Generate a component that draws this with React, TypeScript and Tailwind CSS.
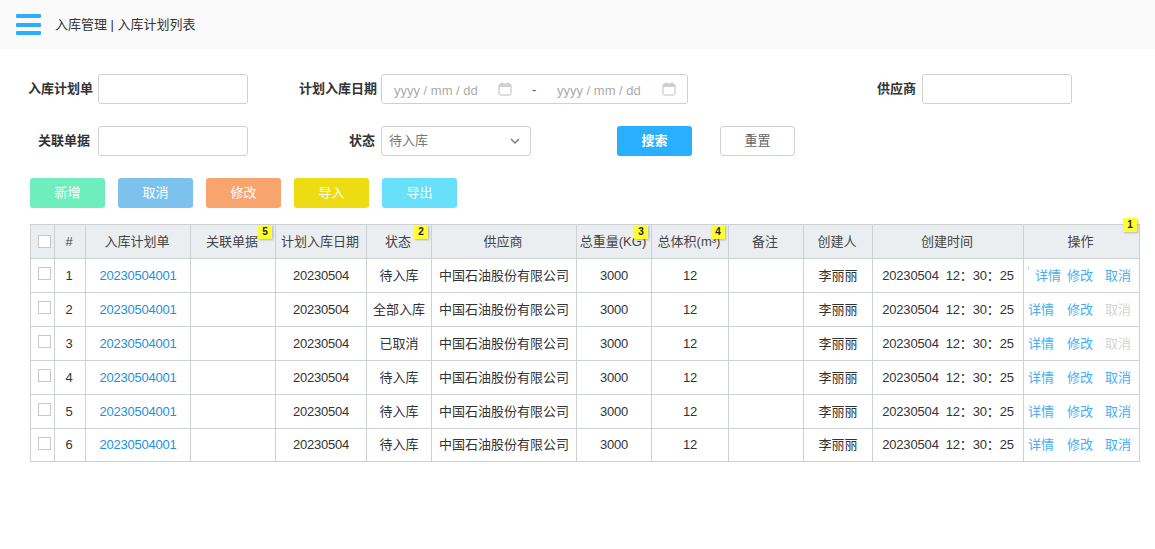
import React from "react";

const font = { fontFamily: '"Liberation Sans", Arial, "Noto Sans CJK SC", sans-serif' };

function Calendar() {
  return (
    <svg width="14" height="14" viewBox="0 0 14 14" fill="none" className="shrink-0">
      <rect x="1" y="2" width="12" height="11" rx="1.5" stroke="#bcbcbc" strokeWidth="1" />
      <rect x="1" y="2" width="12" height="3" fill="#d0d0d0" />
      <path d="M4 0.5v2M10 0.5v2" stroke="#bcbcbc" strokeWidth="1" />
    </svg>
  );
}

function Badge({ n, cls }: { n: number; cls: string }) {
  return (
    <span className={`absolute flex h-[14px] w-[14px] items-center justify-center bg-[#ffff33] text-[10px] font-bold leading-none text-[#222] shadow-[1px_1px_2px_rgba(0,0,0,0.25)] ${cls}`}>
      {n}
    </span>
  );
}

const widths = [24, 31, 105, 85, 91, 65, 145, 75, 77, 75, 69, 151, 116];
const statuses = ["待入库", "全部入库", "已取消", "待入库", "待入库", "待入库"];
const cell = "border border-[#cdd1d4] p-0 text-center";
const head = "border border-[#cdd1d4] p-0 pr-[2px] text-center font-normal";
const digits = "tracking-[-0.25px]";

function Input({ w = "w-[150px]" }: { w?: string }) {
  return <div className={`h-[30px] rounded-[3px] border border-[#cdd1d4] bg-white ${w}`} />;
}

const actions = ["bg-[#6eedbd]", "bg-[#7cc2ed]", "bg-[#f7a56d]", "bg-[#eddc12]", "bg-[#69e0f9]"];
const actionLabels = ["新增", "取消", "修改", "导入", "导出"];

export default function App() {
  return (
    <div className="h-[549px] w-[1155px] overflow-hidden bg-white text-[13px] text-[#333]" style={font}>
      <header className="flex h-[49px] items-center bg-[#fafafa] pl-[16px]">
        <div className="flex h-[21px] w-[25px] flex-col justify-between">
          <div className="h-[4px] rounded-[1px] bg-[#2aafff]" />
          <div className="h-[4px] rounded-[1px] bg-[#2aafff]" />
          <div className="h-[4px] rounded-[1px] bg-[#2aafff]" />
        </div>
        <span className="ml-[14px] text-[13px]">入库管理 | 入库计划列表</span>
      </header>

      <div className="mt-[25px] flex h-[30px] items-center">
        <label className="w-[93px] text-right font-bold">入库计划单</label>
        <div className="ml-[5px]"><Input /></div>
        <label className="w-[129px] text-right font-bold">计划入库日期</label>
        <div className="ml-[4px] flex h-[30px] w-[307px] items-center rounded-[3px] border border-[#cdd1d4] pl-[12px] text-[#aaaaaa]">
          <span className="w-[104px] pt-[3px]">yyyy / mm / dd</span>
          <Calendar />
          <span className="ml-[20px] w-[25px] pt-[1px] text-[#555]">-</span>
          <span className="w-[105px] pt-[3px]">yyyy / mm / dd</span>
          <Calendar />
        </div>
        <label className="w-[228px] text-right font-bold">供应商</label>
        <div className="ml-[6px]"><Input /></div>
      </div>

      <div className="mt-[22px] flex h-[30px] items-center">
        <label className="w-[90px] text-right font-bold">关联单据</label>
        <div className="ml-[8px]"><Input /></div>
        <label className="w-[127px] text-right font-bold">状态</label>
        <div className="ml-[6px] flex h-[30px] w-[150px] items-center justify-between rounded-[3px] border border-[#cdd1d4] pl-[7px] pr-[10px] text-[#777]">
          <span>待入库</span>
          <svg width="10" height="6" viewBox="0 0 10 6" fill="none">
            <path d="M1 1l4 4 4-4" stroke="#777" strokeWidth="1.4" />
          </svg>
        </div>
        <button className="ml-[86px] h-[30px] w-[75px] rounded-[3px] bg-[#2aafff] font-bold text-white">搜索</button>
        <button className="ml-[28px] h-[30px] w-[75px] rounded-[3px] border border-[#cdd1d4] bg-white text-[#666]">重置</button>
      </div>

      <div className="ml-[30px] mt-[22px] flex gap-[13px]">
        {actions.map((c, i) => (
          <button key={i} className={`h-[30px] w-[75px] rounded-[3px] text-white ${c}`}>{actionLabels[i]}</button>
        ))}
      </div>

      <table className="ml-[30px] mt-[16px] w-[1110px] table-fixed border-collapse">
        <colgroup>
          {widths.map((w, i) => (
            <col key={i} style={{ width: w }} />
          ))}
        </colgroup>
        <thead>
          <tr className="h-[34px] bg-[#ebeef1] text-[#444]">
            <th className="border border-[#cdd1d4] p-0">
              <div className="ml-[7px] h-[13px] w-[13px] border border-[#c8c8c8] bg-white" />
            </th>
            <th className={head}>#</th>
            <th className={head}>入库计划单</th>
            <th className={`${head} relative`}>关联单据<Badge n={5} cls="right-[3px] top-0" /></th>
            <th className={head}>计划入库日期</th>
            <th className={`${head} relative`}>状态<Badge n={2} cls="right-[3px] top-0" /></th>
            <th className={head}>供应商</th>
            <th className={`${head} relative whitespace-nowrap`}>总重量(KG)<Badge n={3} cls="right-[3px] top-0" /></th>
            <th className={`${head} relative whitespace-nowrap`}>总体积(m³)<Badge n={4} cls="right-[3px] top-0" /></th>
            <th className={head}>备注</th>
            <th className={head}>创建人</th>
            <th className={head}>创建时间</th>
            <th className={`${head} relative`}>操作<Badge n={1} cls="right-[2px] -top-[7px]" /></th>
          </tr>
        </thead>
        <tbody>
          {statuses.map((s, i) => (
            <tr key={i} className={i === 5 ? "h-[33px]" : "h-[34px]"}>
              <td className="border border-[#cdd1d4] p-0 align-top">
                <div className="ml-[7px] mt-[8px] h-[13px] w-[13px] border border-[#c8c8c8] bg-white" />
              </td>
              <td className={`${cell} pr-[2px]`}>{i + 1}</td>
              <td className={`${cell} ${digits} text-[#1e90e0]`}>20230504001</td>
              <td className={cell} />
              <td className={`${cell} ${digits}`}>20230504</td>
              <td className={cell}>{s}</td>
              <td className={`${cell} whitespace-nowrap`}>中国石油股份有限公司</td>
              <td className={`${cell} ${digits}`}>3000</td>
              <td className={`${cell} ${digits}`}>12</td>
              <td className={cell} />
              <td className={cell}>李丽丽</td>
              <td className={`${cell} tracking-[-0.15px] whitespace-pre`}>20230504  12：30：25</td>
              <td className={`${cell} text-left text-[#45aef5]`}>
                <div className="flex pl-[4px]">
                  {i === 0 && <span className="mt-[1px] h-[3px] w-[1px] bg-[#b5d8f7]" />}
                  <span className={i === 0 ? "ml-[6px]" : ""}>详情</span>
                  <span className={i === 0 ? "ml-[6px]" : "ml-[13px]"}>修改</span>
                  <span className={`ml-[12px] ${i === 1 || i === 2 ? "text-[#d5d5d5]" : ""}`}>取消</span>
                </div>
              </td>
            </tr>
          ))}
        </tbody>
      </table>
    </div>
  );
}
